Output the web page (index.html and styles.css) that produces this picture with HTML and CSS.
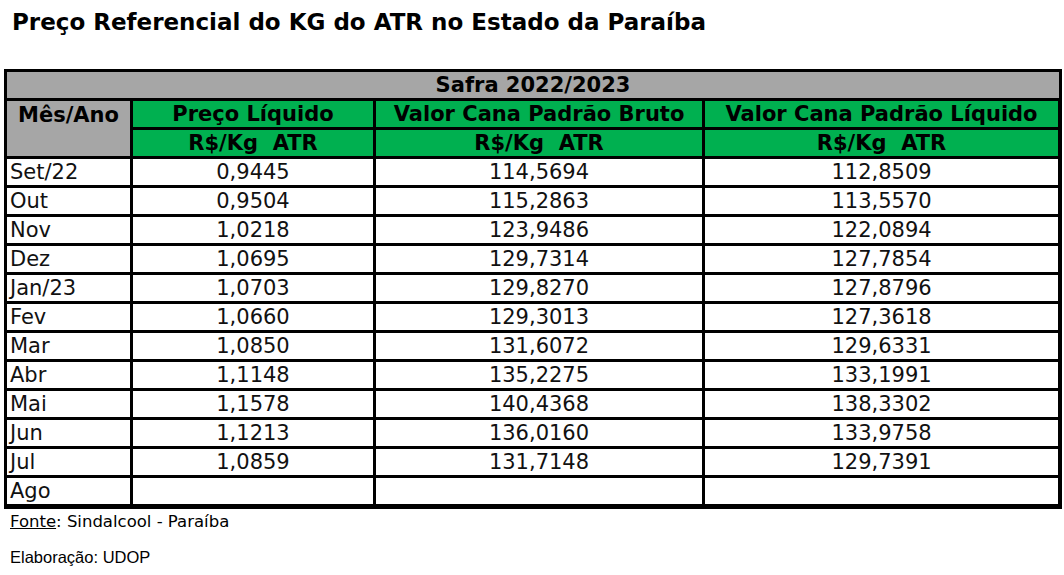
FILE: index.html
```html
<!DOCTYPE html>
<html lang="pt-BR">
<head>
<meta charset="utf-8">
<title>Preço Referencial do KG do ATR</title>
<link rel="stylesheet" href="styles.css">
</head>
<body>
<h1 class="title">Preço Referencial do KG do ATR no Estado da Paraíba</h1>
<table class="atr">
  <colgroup>
    <col class="c0"><col class="c1"><col class="c2"><col class="c3">
  </colgroup>
  <thead>
    <tr><th class="safra" colspan="4">Safra 2022/2023</th></tr>
    <tr>
      <th class="mes" rowspan="2">Mês/Ano</th>
      <th class="green">Preço Líquido</th>
      <th class="green">Valor Cana Padrão Bruto</th>
      <th class="green last">Valor Cana Padrão Líquido</th>
    </tr>
    <tr class="unit">
      <th class="green">R$/Kg&nbsp; ATR</th>
      <th class="green">R$/Kg&nbsp; ATR</th>
      <th class="green last">R$/Kg&nbsp; ATR</th>
    </tr>
  </thead>
  <tbody>
    <tr><td class="m">Set/22</td><td>0,9445</td><td>114,5694</td><td class="last">112,8509</td></tr>
    <tr><td class="m">Out</td><td>0,9504</td><td>115,2863</td><td class="last">113,5570</td></tr>
    <tr><td class="m">Nov</td><td>1,0218</td><td>123,9486</td><td class="last">122,0894</td></tr>
    <tr><td class="m">Dez</td><td>1,0695</td><td>129,7314</td><td class="last">127,7854</td></tr>
    <tr><td class="m">Jan/23</td><td>1,0703</td><td>129,8270</td><td class="last">127,8796</td></tr>
    <tr><td class="m">Fev</td><td>1,0660</td><td>129,3013</td><td class="last">127,3618</td></tr>
    <tr><td class="m">Mar</td><td>1,0850</td><td>131,6072</td><td class="last">129,6331</td></tr>
    <tr><td class="m">Abr</td><td>1,1148</td><td>135,2275</td><td class="last">133,1991</td></tr>
    <tr><td class="m">Mai</td><td>1,1578</td><td>140,4368</td><td class="last">138,3302</td></tr>
    <tr><td class="m">Jun</td><td>1,1213</td><td>136,0160</td><td class="last">133,9758</td></tr>
    <tr><td class="m">Jul</td><td>1,0859</td><td>131,7148</td><td class="last">129,7391</td></tr>
    <tr class="final"><td class="m">Ago</td><td></td><td></td><td class="last"></td></tr>
  </tbody>
</table>
<p class="fonte"><span class="u">Fonte</span>: Sindalcool - Paraíba</p>
<p class="elab">Elaboração: UDOP</p>
</body>
</html>
```
FILE: styles.css
```css
html, body {
  margin: 0;
  padding: 0;
  background: #ffffff;
}
body {
  font-family: "DejaVu Sans", Verdana, sans-serif;
  color: #000;
}
.title {
  margin: 8px 0 0 12px;
  font-size: 23px;
  font-weight: bold;
  line-height: 29px;
  height: 29px;
}
.atr {
  margin: 32px 0 0 4px;
  border-collapse: separate;
  border-spacing: 0;
  border-top: 3px solid #000;
  border-left: 3px solid #000;
  table-layout: fixed;
  width: 1055px;
}
.c0 { width: 126px; }
.c1 { width: 243px; }
.c2 { width: 329px; }
.c3 { width: 357px; }
.atr th, .atr td {
  padding: 1px 0 0 0;
  height: 25px;
  line-height: 25px;
  border-right: 3px solid #000;
  border-bottom: 3px solid #000;
  font-size: 21px;
  text-align: center;
  white-space: nowrap;
  overflow: hidden;
}
.atr th.last, .atr td.last {
  border-right-width: 4px;
}
.atr th {
  font-weight: bold;
}
.safra {
  background: #a6a6a6;
}
.mes {
  background: #a6a6a6;
  vertical-align: top;
}
.atr th.mes {
  padding-top: 2px;
}
.green {
  background: #00b050;
}
.atr td {
  color: #111;
}
.atr td.m {
  text-align: left;
  padding-left: 3px;
}
.atr tr.final td {
  border-bottom-width: 5px;
}
.fonte {
  margin: 2px 0 0 10px;
  font-size: 16.5px;
  line-height: 22px;
}
.u {
  text-decoration: underline;
}
.elab {
  margin: 14px 0 0 10px;
  font-family: "Liberation Sans", Arial, sans-serif;
  font-size: 16.5px;
  line-height: 20px;
}
```
